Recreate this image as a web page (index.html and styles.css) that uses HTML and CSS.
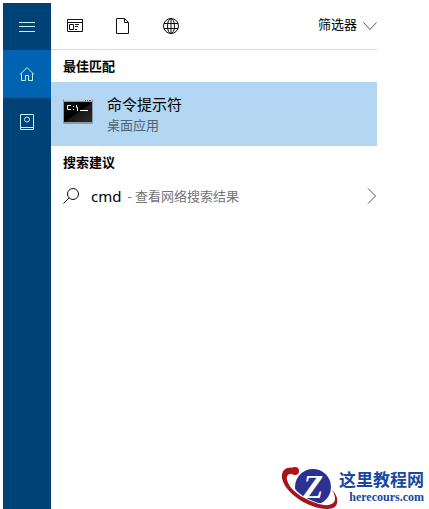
FILE: index.html
```
<!DOCTYPE html>
<html lang="zh-CN">
<head>
    <meta charset="UTF-8">
    <meta name="viewport" content="width=device-width, initial-scale=1.0">
    <title>搜索</title>
    <link rel="stylesheet" href="styles.css">
</head>
<body>
    <nav class="sidebar">
        <button type="button" aria-label="菜单">
            <svg width="16" height="16" viewBox="0 0 16 16"><path d="M0 3.500h16M0 7.500h16M0 12.500h16"/></svg>
        </button>
        <button type="button" class="active" aria-label="主页">
            <svg width="16" height="16" viewBox="0 0 16 16"><path d="M1 8.500L8 1.500l7 7M2.500 7.500v7h4v-5h3v5h4v-7"/></svg>
        </button>
        <button type="button" aria-label="笔记本">
            <svg width="16" height="16" viewBox="0 0 16 16"><path d="M1.500 .5h13v15h-13zM1.500 13.500h13"/><circle cx="8" cy="5.500" r="2.500"/></svg>
        </button>
    </nav>
    <div class="main">
        <div class="panel">
            <header class="toolbar">
                <button type="button" aria-label="应用">
                    <svg width="16" height="16" viewBox="0 0 16 16"><path d="M.5 1.500h15v12H.5zM.5 4.500h15M2.500 6.500h4v5h-4zM8 6.500h4M8 8.500h3M8 11.500h2"/></svg>
                </button>
                <button type="button" aria-label="文档">
                    <svg width="16" height="16" viewBox="0 0 16 16"><path d="M1.500 .5h8l4 4v11h-12zM9.500 .5v4h4"/></svg>
                </button>
                <button type="button" aria-label="网页">
                    <svg width="16" height="16" viewBox="0 0 16 16"><circle cx="8" cy="8" r="7.500"/><ellipse cx="8" cy="8" rx="3.500" ry="7.500"/><path d="M1 5.500h14M1 10.500h14M8 .5v15"/></svg>
                </button>
                <button type="button" class="filter">
                    筛选器
                    <svg width="14" height="16" viewBox="0 0 14 16"><path d="M.5 6.500l6.500 7 6.500-7"/></svg>
                </button>
            </header>
            <h2>最佳匹配</h2>
            <button type="button" class="best">
                <svg class="cmd-icon" width="30" height="26" viewBox="0 0 30 26">
                    <defs>
                        <linearGradient id="screen" x1="0" y1="0" x2="1" y2="1">
                            <stop offset="0" stop-color="#111"/>
                            <stop offset=".5" stop-color="#000"/>
                            <stop offset=".52" stop-color="#181818"/>
                            <stop offset="1" stop-color="#2b2b2b"/>
                        </linearGradient>
                    </defs>
                    <rect width="30" height="25" rx="1" fill="#8d99a2"/>
                    <rect x="1" width="28" height="2" fill="#c4cdd3"/>
                    <path d="M22 1.500h1M24 1.500h1M26 1.500h2" stroke="#59636b"/>
                    <rect x="1" y="3" width="28" height="20" fill="url(#screen)"/>
                    <path d="M8 6.500H4.500v4H8M10.500 7v1M10.500 10v1M13.500 6v2.500h1V12M17 11.500h8" fill="none" stroke="#fff"/>
                </svg>
                <span class="best-text">
                    <span class="name">命令提示符</span>
                    <span class="type">桌面应用</span>
                </span>
            </button>
            <h2>搜索建议</h2>
            <button type="button" class="suggest">
                <svg width="16" height="16" viewBox="0 0 16 16"><circle cx="10" cy="6" r="5.500"/><path d="M6 10L.5 15.500"/></svg>
                <span class="query">cmd</span>
                <span class="hint">- 查看网络搜索结果</span>
                <svg class="arrow" width="10" height="16" viewBox="0 0 10 16"><path d="M1 .5L8.500 8 1 15.500"/></svg>
            </button>
        </div>
        <footer class="brand">
            <svg width="58" height="44" viewBox="0 0 58 44">
                <circle cx="32" cy="22" r="18" fill="#2b3190"/>
                <path d="M8 14c3 10 15 21 34 25l-6 3C20 40 7 29 5 16z" fill="#fff"/>
                <text class="brand-z" x="32" y="33" text-anchor="middle">Z</text>
                <path d="M14 3C6 1 0 5 1 13c2 12 19 26 37 30 10 2 17 1 18-5 1-5-1-9-5-13 3 5 4 9 2 12-3 4-10 4-18 1C20 33 8 24 6 15 5 10 8 8 13 9z" fill="#a31519"/>
                <circle cx="14" cy="6" r="4" fill="#b51218"/>
            </svg>
            <div class="brand-text">
                <div class="brand-name">这里教程网</div>
                <div class="brand-url">herecours.com</div>
            </div>
        </footer>
    </div>
</body>
</html>
```

FILE: styles.css
```
* {
    box-sizing: border-box;
}
body {
    margin: 0;
    padding: 3px 0 0 3px;
    min-height: 100vh;
    display: flex;
    background: #fff;
    color: #000;
    font-family: "Noto Sans", "Noto Sans CJK SC", sans-serif;
}
button {
    border: none;
    padding: 0;
    background: none;
    color: inherit;
    font-family: inherit;
    cursor: pointer;
}
svg {
    display: block;
    flex-shrink: 0;
}
button svg {
    fill: none;
    stroke: #111;
}
.sidebar {
    width: 48px;
    flex-shrink: 0;
    background: #004275;
}
.sidebar button {
    width: 48px;
    height: 48px;
    display: flex;
    align-items: center;
    justify-content: center;
}
.sidebar button:first-child {
    height: 47px;
}
.sidebar .active {
    background: #0063b1;
}
.sidebar svg {
    stroke: #c5f3f5;
}
.main {
    flex: 1;
    display: flex;
    flex-direction: column;
}
.panel {
    margin-right: 52px;
}
.toolbar {
    height: 47px;
    padding-left: 16px;
    display: flex;
    align-items: center;
    gap: 32px;
    border-bottom: 1px solid #d9d9d9;
}
.toolbar .filter {
    margin-left: auto;
    padding-bottom: 4px;
    display: flex;
    align-items: center;
    gap: 6px;
    font-size: 13px;
    line-height: 20px;
}
.filter svg, .arrow {
    stroke: #555;
}
h2 {
    margin: 0;
    padding: 6px 12px;
    font-size: 13px;
    line-height: 20px;
    font-weight: bold;
}
.best {
    width: 100%;
    height: 64px;
    padding: 0 12px 4px;
    display: flex;
    align-items: center;
    gap: 14px;
    background: #b3d6f2;
    text-align: left;
}
.cmd-icon {
    stroke: none;
}
.best-text {
    padding-top: 4px;
    display: flex;
    flex-direction: column;
}
.name {
    font-size: 15px;
    line-height: 22px;
}
.type {
    font-size: 13px;
    line-height: 20px;
    color: #4f6373;
}
.suggest {
    width: 100%;
    height: 36px;
    padding-left: 12px;
    display: flex;
    align-items: center;
    text-align: left;
}
.query {
    margin-left: 12px;
    font-size: 15px;
    line-height: 22px;
}
.hint {
    margin-left: 6px;
    font-size: 13px;
    line-height: 20px;
    color: #757575;
}
.arrow {
    margin-left: auto;
}
.brand {
    margin-top: auto;
    padding-right: 5px;
    align-self: flex-end;
    display: flex;
    align-items: center;
}
.brand-z {
    font-family: "Liberation Serif", serif;
    font-size: 33px;
    font-weight: bold;
    font-style: italic;
    fill: #fff;
}
.brand-text {
    text-align: right;
    font-weight: bold;
    color: #17479e;
}
.brand-name {
    font-size: 17px;
    line-height: 20px;
}
.brand-url {
    font-family: "Liberation Serif", serif;
    font-size: 12px;
    line-height: 14px;
}
```
